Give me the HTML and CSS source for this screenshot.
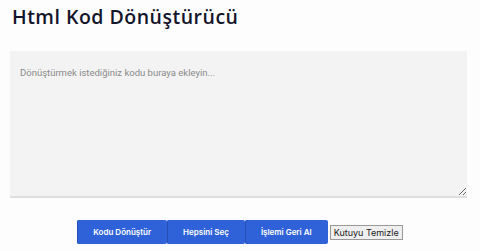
FILE: index.html
```html
<!DOCTYPE html>
<html lang="tr">
<head>
  <meta charset="UTF-8" />
  <meta name="viewport" content="width=device-width, initial-scale=1.0" />
  <title>Html Kod Dönüştürücü</title>
  <link rel="stylesheet" href="styles.css">
</head>
<body>
  <h1 class="baslik">Html Kod Dönüştürücü</h1>

  <textarea id="kod" class="kod-kutusu" placeholder="Dönüştürmek istediğiniz kodu buraya ekleyin..."></textarea>

  <div class="butonlar">
    <button class="mavi-buton">Kodu Dönüştür</button>
    <button class="mavi-buton">Hepsini Seç</button>
    <button class="mavi-buton">İşlemi Geri Al</button>
    <button class="temizle">Kutuyu Temizle</button>
  </div>
</body>
</html>
```

FILE: styles.css
```css
body {
  margin: 0;
  padding: 0 10px;
  background-color: #fdfdfe;
  font-family: 'Inter', sans-serif;
}

.baslik {
  margin: 3px 0 0 2px;
  font-family: 'Open Sans', sans-serif;
  font-weight: 600;
  font-size: 19.5px;
  letter-spacing: 0.5px;
  line-height: 27px;
  color: #13152b;
}

.kod-kutusu {
  display: block;
  box-sizing: border-box;
  width: 457px;
  height: 147px;
  margin-top: 21px;
  padding: 16px 10px;
  border: none;
  border-bottom: 2px solid #dedede;
  background-color: #f3f3f3;
  font-family: 'Roboto', sans-serif;
  font-size: 9.5px;
  color: #333;
  outline: none;
}

.kod-kutusu::placeholder {
  color: #8a8a8a;
}

.butonlar {
  display: flex;
  justify-content: center;
  align-items: center;
  margin-top: 22px;
}

.mavi-buton {
  height: 24px;
  padding: 0 16px;
  border: none;
  border-radius: 2px;
  background-color: #2f62d8;
  box-shadow: inset 1px 0 0 #2550b8;
  color: #fff;
  font-family: 'Inter', sans-serif;
  font-size: 8px;
  font-weight: 600;
}

.temizle {
  margin-left: 2px;
  padding: 1px 3px;
  font-family: 'Inter', sans-serif;
  font-size: 9px;
  color: #222;
  background-color: #efefef;
  border: 1px solid #999;
  border-radius: 0;
}
```
